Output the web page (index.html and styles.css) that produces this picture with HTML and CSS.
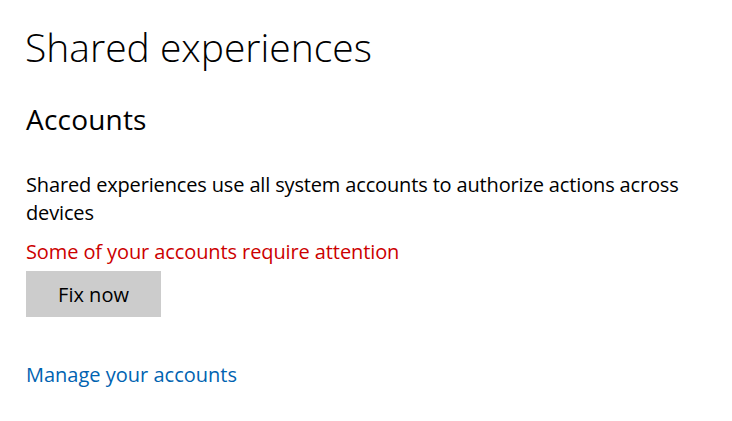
FILE: index.html
```html
<!DOCTYPE html>
<html lang="en">
<head>
<meta charset="utf-8">
<title>Shared experiences</title>
<link rel="stylesheet" href="styles.css">
</head>
<body>
<main class="page">
  <h1 class="title">Shared experiences</h1>
  <h2 class="subtitle">Accounts</h2>
  <p class="desc">Shared experiences use all system accounts to authorize actions across devices</p>
  <p class="warn">Some of your accounts require attention</p>
  <button class="fix" type="button">Fix now</button>
  <a class="link" href="#">Manage your accounts</a>
</main>
</body>
</html>
```
FILE: styles.css
```css
html, body {
  margin: 0;
  padding: 0;
  background: #ffffff;
}
body {
  font-family: "Open Sans", "Noto Sans", "Liberation Sans", sans-serif;
  color: #000;
}
.page {
  display: flex;
  flex-direction: column;
  align-items: flex-start;
  padding: 20px 24px 0 26px;
  width: 682px;
}
.title {
  margin: 0 0 0 -1px;
  font-weight: 300;
  font-size: 39px;
  line-height: 54px;
}
.subtitle {
  margin: 27px 0 0 0;
  font-weight: 400;
  font-size: 28px;
  line-height: 36px;
  letter-spacing: 0.2px;
}
.desc {
  margin: 34px 0 0 0;
  font-size: 20px;
  line-height: 28px;
  letter-spacing: -0.15px;
}
.warn {
  margin: 11px 0 0 0;
  font-size: 20px;
  line-height: 28px;
  letter-spacing: -0.1px;
  color: #cc0000;
}
.fix {
  margin-top: 5px;
  width: 135px;
  height: 46px;
  border: none;
  background: #cccccc;
  font-family: inherit;
  font-size: 20px;
  color: #000;
  padding: 0;
}
.link {
  margin-top: 44px;
  font-size: 20px;
  line-height: 28px;
  color: #0063b1;
  text-decoration: none;
}
```
